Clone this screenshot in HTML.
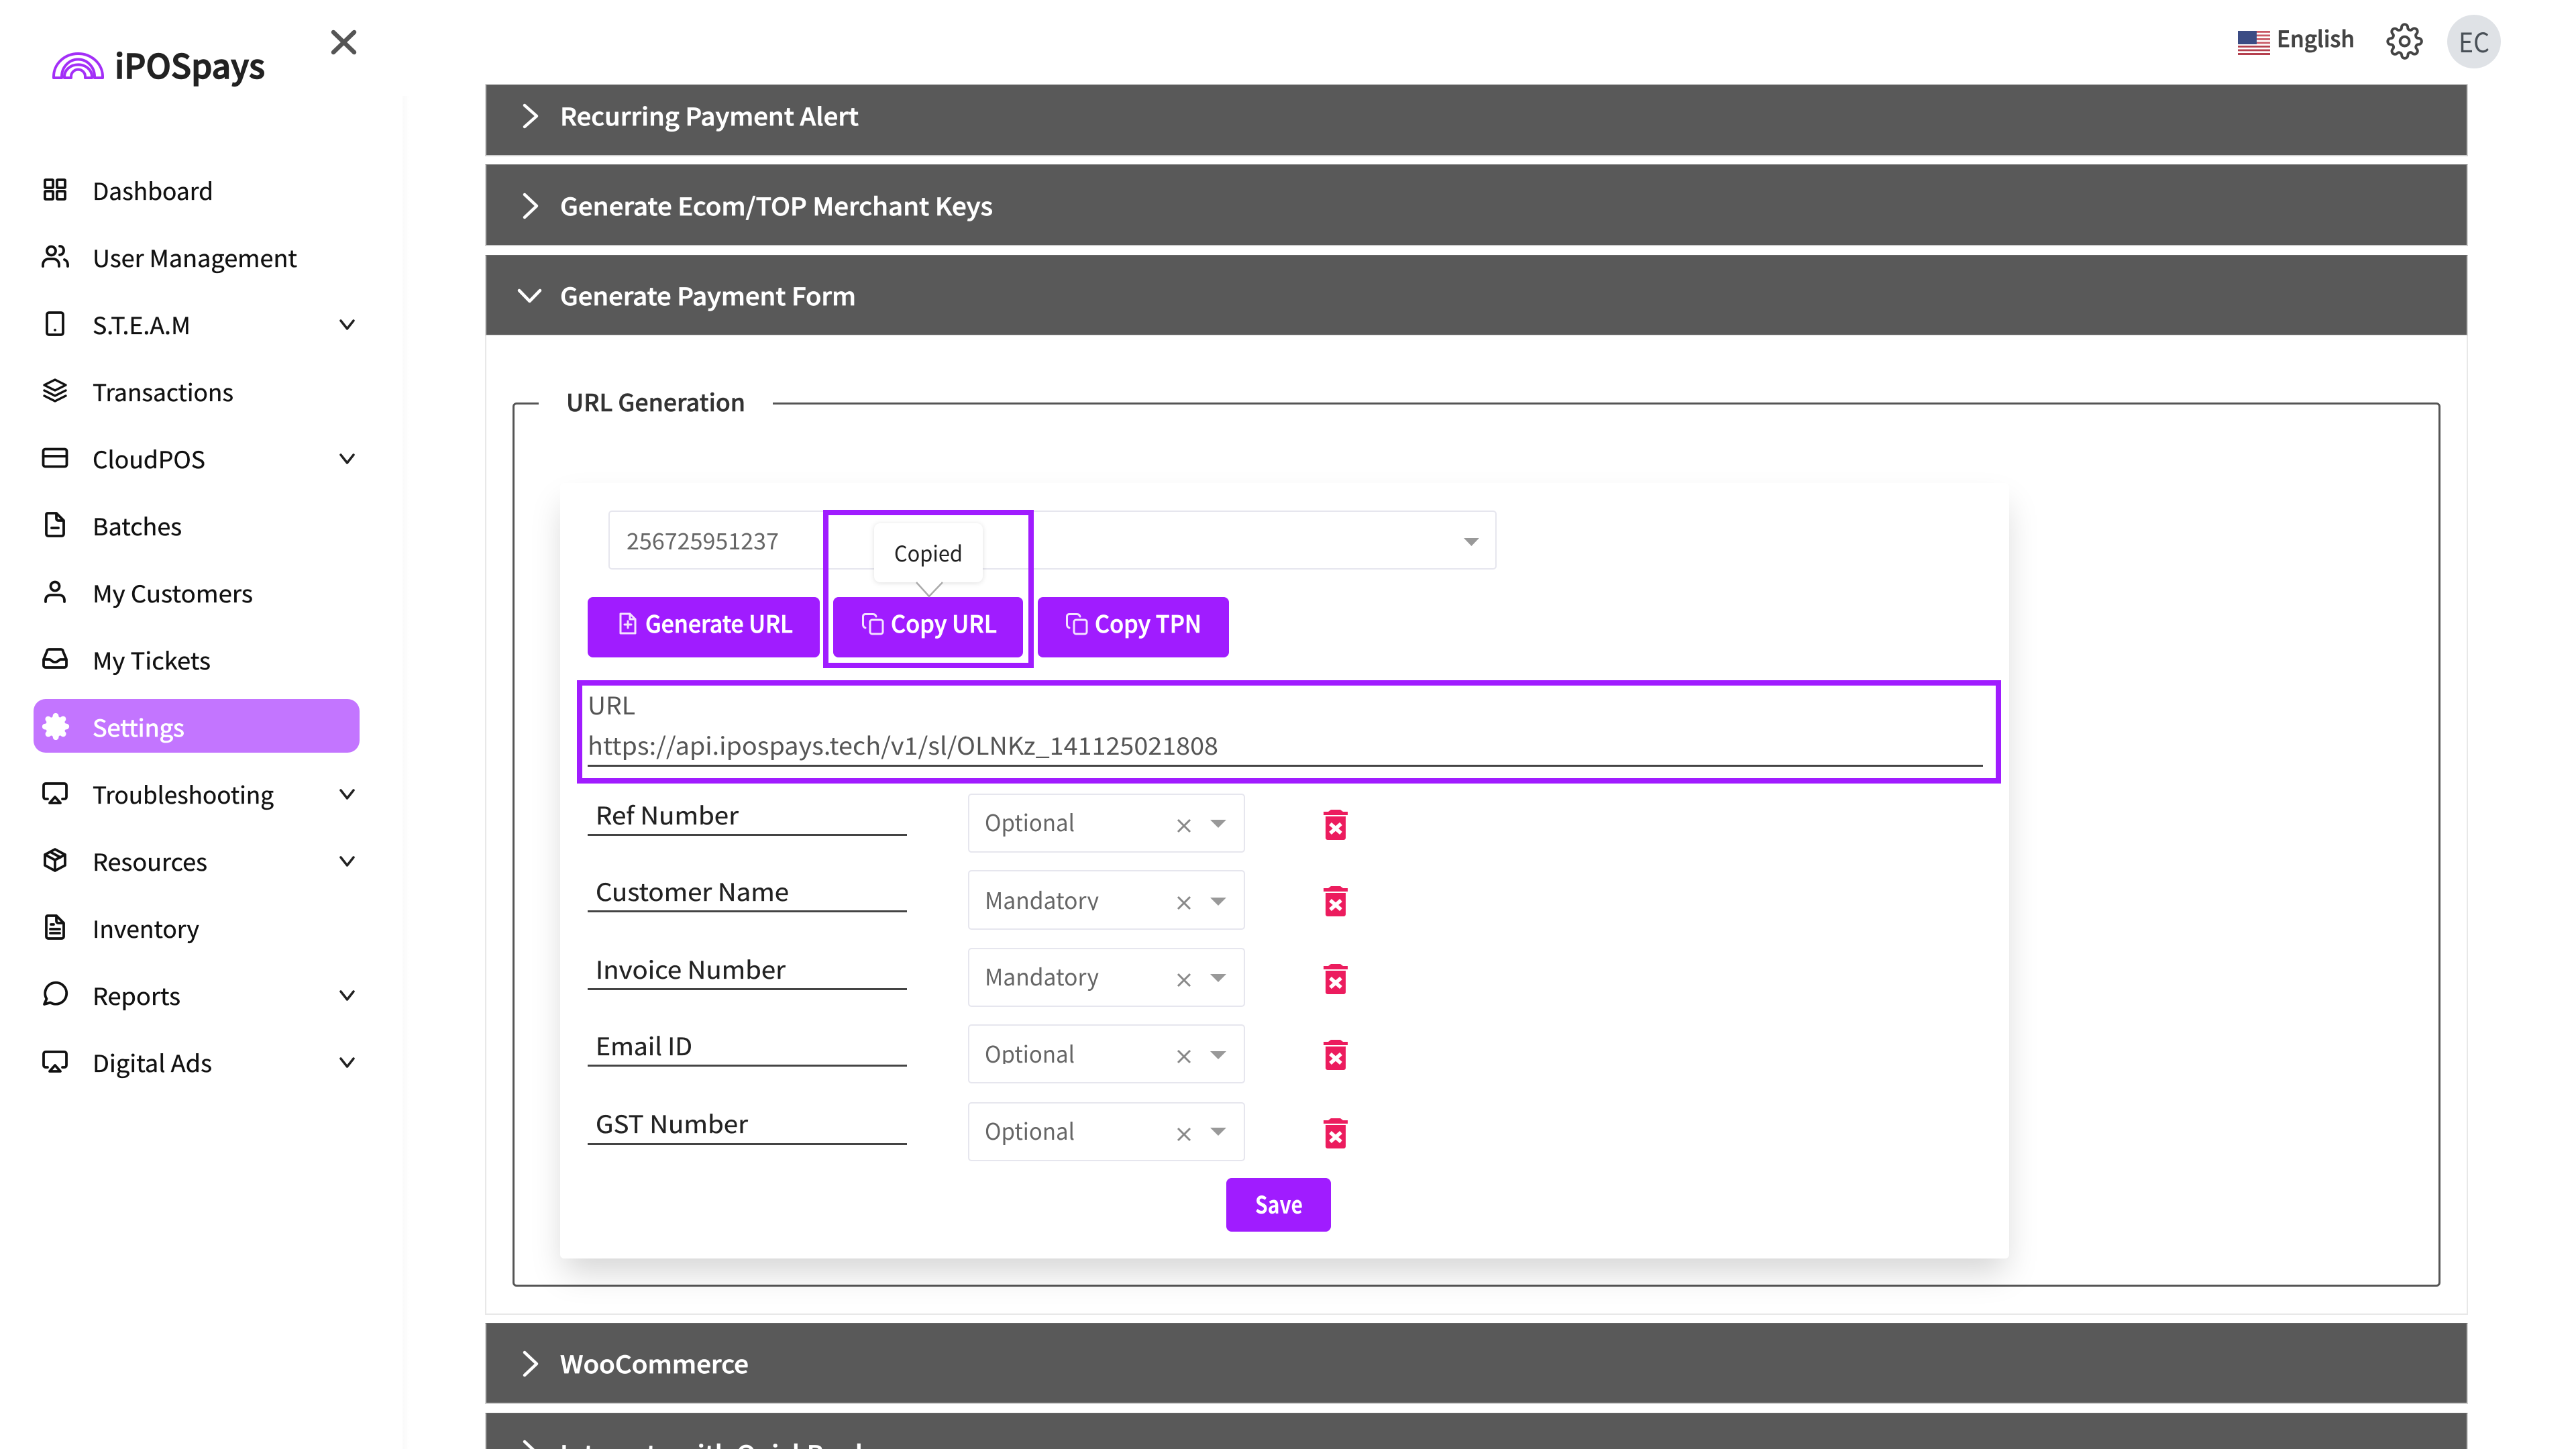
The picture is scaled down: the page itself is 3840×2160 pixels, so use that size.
<!DOCTYPE html>
<html lang="en">
<head>
<meta charset="utf-8">
<title>iPOSpays</title>
<style>
html,body{margin:0;padding:0;background:#fff;width:3840px;height:2160px;overflow:hidden}
#p{position:relative;width:3840px;height:2160px;overflow:hidden;background:#fff}
.b{position:absolute;box-sizing:border-box}
.hd{left:723px;width:2956px;background:#595959;border:2px solid #cfcfcf;border-top:1px solid #6a6a6a}
.pu{background:#a01cff;border-radius:8px}
.sel{background:#fff;border:2px solid #e6e6ee;border-radius:5px;left:1443px;width:413px}
.hl{border:8px solid #a01cff}
.ul{background:#444;left:876px;width:476px;height:3px}
svg{position:absolute;left:0;top:0}
text{font-family:"Noto Sans CJK JP","Liberation Sans",sans-serif}
.n{font-size:35px;fill:#111;stroke:#111;stroke-width:.35px}
.h{font-size:36px;fill:#fff;stroke:#fff;stroke-width:.7px;font-weight:500}
.l{font-size:36px;fill:#222;stroke:#222;stroke-width:.3px}
.g{font-size:34px;fill:#666}
.w{font-size:35px;fill:#fff;stroke:#fff;stroke-width:.7px;font-weight:500}
.i{fill:none;stroke:#111;stroke-width:3.8;stroke-linecap:round;stroke-linejoin:round}
.ch{fill:none;stroke:#fff;stroke-width:4.5;stroke-linecap:round;stroke-linejoin:round}
.wi{fill:none;stroke:#f3e2ff;stroke-width:3;stroke-linecap:round;stroke-linejoin:round}
.x{fill:none;stroke:#888;stroke-width:3}
.ar{fill:#999}
.tr{fill:#ec1c5e}
.tx{fill:none;stroke:#fff;stroke-width:5.5}
</style>
</head>
<body>
<div id="p">
<!-- sidebar -->
<div class="b" style="left:600px;top:143px;width:9px;height:2017px;background:linear-gradient(90deg,#fafafa,#fcfcfc 60%,#fff)"></div>
<div class="b" style="left:50px;top:1042px;width:486px;height:80px;background:#c375ff;border-radius:18px"></div>

<!-- header top -->
<div class="b" style="left:3648px;top:22px;width:80px;height:80px;border-radius:50%;background:#dfe2e6"></div>

<!-- accordion -->
<div class="b hd" style="top:126px;height:107px"></div>
<div class="b hd" style="top:245px;height:122px"></div>
<div class="b hd" style="top:380px;height:121px"></div>
<div class="b" style="left:723px;top:500px;width:2956px;height:1460px;border:2px solid #e8e8e8;border-top:0;background:#fff"></div>
<div class="b hd" style="top:1972px;height:121px"></div>
<div class="b hd" style="top:2106px;height:54px;border-bottom:0"></div>

<!-- fieldset -->
<div class="b" style="left:764px;top:600px;width:2874px;height:1318px;border:3px solid #555;border-radius:6px"></div>
<div class="b" style="left:803px;top:590px;width:349px;height:24px;background:#fff"></div>

<!-- card -->
<div class="b" style="left:835px;top:720px;width:2160px;height:1156px;background:#fff;border-radius:6px;box-shadow:0 26px 46px -6px rgba(0,0,0,.17)"></div>
<div class="b" style="left:907px;top:761px;width:1324px;height:88px;background:#fff;border:2px solid #e6e6ee;border-radius:5px"></div>

<!-- buttons -->
<div class="b pu" style="left:876px;top:890px;width:346px;height:90px"></div>
<div class="b pu" style="left:1242px;top:890px;width:283px;height:90px"></div>
<div class="b pu" style="left:1547px;top:890px;width:285px;height:90px"></div>
<div class="b hl" style="left:1227px;top:760px;width:314px;height:236px"></div>
<div class="b" style="left:1303px;top:780px;width:162px;height:88px;background:#fff;border-radius:9px;box-shadow:0 1px 8px rgba(0,0,0,.13)"></div>

<!-- url -->
<div class="b hl" style="left:860px;top:1014px;width:2123px;height:154px"></div>
<div class="b" style="left:876px;top:1140px;width:2080px;height:3px;background:#444"></div>

<!-- rows -->
<div class="b ul" style="top:1243px"></div>
<div class="b ul" style="top:1357px"></div>
<div class="b ul" style="top:1473px"></div>
<div class="b ul" style="top:1587px"></div>
<div class="b ul" style="top:1704px"></div>
<div class="b sel" style="top:1183px;height:88px"></div>
<div class="b sel" style="top:1297px;height:89px"></div>
<div class="b sel" style="top:1413px;height:88px"></div>
<div class="b sel" style="top:1527px;height:88px"></div>
<div class="b sel" style="top:1643px;height:88px"></div>
<div class="b pu" style="left:1828px;top:1756px;width:156px;height:80px"></div>

<svg width="3840" height="2160" viewBox="0 0 3840 2160" xmlns="http://www.w3.org/2000/svg">
<!-- logo -->
<g fill="none" stroke="#a32ff7" stroke-width="4" stroke-linejoin="round">
<path d="M80 116V114A36.5 34 0 0 1 153 114V116H141V114A24.5 25.5 0 0 0 92 114V116Z"/>
<path d="M96 116V114A20.5 17.6 0 0 1 137 114V116H127V114A10.5 10.4 0 0 0 106 114V116Z"/>
</g>
<text x="171" y="117" font-size="50" font-weight="500" fill="#222" stroke="#222" stroke-width="1.5" textLength="224" lengthAdjust="spacingAndGlyphs">iPOSpays</text>
<path d="M497 48L528 78M528 48L497 78" fill="none" stroke="#555" stroke-width="6.5" stroke-linecap="round"/>

<!-- nav text -->
<text class="n" x="138" y="298" textLength="180" lengthAdjust="spacingAndGlyphs">Dashboard</text>
<text class="n" x="138" y="398" textLength="305" lengthAdjust="spacingAndGlyphs">User Management</text>
<text class="n" x="138" y="498" textLength="146" lengthAdjust="spacingAndGlyphs">S.T.E.A.M</text>
<text class="n" x="138" y="598" textLength="210" lengthAdjust="spacingAndGlyphs">Transactions</text>
<text class="n" x="138" y="698" textLength="168" lengthAdjust="spacingAndGlyphs">CloudPOS</text>
<text class="n" x="138" y="798" textLength="133" lengthAdjust="spacingAndGlyphs">Batches</text>
<text class="n" x="138" y="898" textLength="239" lengthAdjust="spacingAndGlyphs">My Customers</text>
<text class="n" x="138" y="998" textLength="176" lengthAdjust="spacingAndGlyphs">My Tickets</text>
<text class="n" x="138" y="1098" textLength="137" lengthAdjust="spacingAndGlyphs" style="fill:#fff;stroke:#fff;stroke-width:.8px">Settings</text>
<text class="n" x="138" y="1198" textLength="270" lengthAdjust="spacingAndGlyphs">Troubleshooting</text>
<text class="n" x="138" y="1298" textLength="171" lengthAdjust="spacingAndGlyphs">Resources</text>
<text class="n" x="138" y="1398" textLength="159" lengthAdjust="spacingAndGlyphs">Inventory</text>
<text class="n" x="138" y="1498" textLength="131" lengthAdjust="spacingAndGlyphs">Reports</text>
<text class="n" x="138" y="1598" textLength="178" lengthAdjust="spacingAndGlyphs">Digital Ads</text>

<!-- nav icons -->
<g class="i" transform="translate(82,282)"><rect x="-15" y="-14" width="12" height="12" rx="1"/><rect x="3" y="-14" width="12" height="12" rx="1"/><rect x="-15" y="3" width="12" height="12" rx="1"/><rect x="3" y="3" width="12" height="12" rx="1"/></g>
<g class="i" transform="translate(82,382)"><circle cx="-5.5" cy="-8" r="6.5"/><path d="M-18 15V13C-18 7-14 4-9 4H-3C2 4 6 7 6 13V15M7-15C11-15 13-12 13-8.500S11-2.500 7-2M14 5C17 6 19 9 19 13V15"/></g>
<g class="i" transform="translate(82,482)"><rect x="-12" y="-16" width="24" height="33" rx="3"/><path d="M0 10h.1"/></g>
<g class="i" transform="translate(82,582)" style="stroke-width:3.4"><path d="M0-16L16-8 0 0-16-8ZM-16 0L0 8 16 0M-16 8L0 16 16 8"/></g>
<g class="i" transform="translate(82,682)"><rect x="-17.500" y="-12.500" width="35" height="26" rx="3"/><path d="M-17.500-2H17.500"/></g>
<g class="i" transform="translate(82,782)"><path d="M-13-15A2 2 0 0 1-11-17H2L13-6V14A3 3 0 0 1 10 17H-10A3 3 0 0 1-13 14ZM2-17V-9A3 3 0 0 0 5-6H13M-5 5H5"/></g>
<g class="i" transform="translate(82,882)"><circle cx="0" cy="-8" r="6.500"/><path d="M-14 15V13C-14 8-11 5-6 5H6C11 5 14 8 14 13V15"/></g>
<g class="i" transform="translate(82,982)"><path d="M-17 1L-12-11A3 3 0 0 1-9-14H9A3 3 0 0 1 12-11L17 1V10A3 3 0 0 1 14 13H-14A3 3 0 0 1-17 10ZM-17 1H-8C-6 1-5 5 0 5S6 1 8 1H17"/></g>
<!-- settings gear -->
<g transform="translate(62,1062) scale(1.75)" fill="#fff" stroke="#fff" stroke-width="1"><path d="M19.400 15a1.650 1.650 0 0 0 .33 1.820l.06.06a2 2 0 0 1 0 2.830 2 2 0 0 1-2.830 0l-.06-.06a1.650 1.650 0 0 0-1.820-.33 1.650 1.650 0 0 0-1 1.510V21a2 2 0 0 1-2 2 2 2 0 0 1-2-2v-.09A1.650 1.650 0 0 0 9 19.400a1.650 1.650 0 0 0-1.820.33l-.06.06a2 2 0 0 1-2.830 0 2 2 0 0 1 0-2.830l.06-.06a1.650 1.650 0 0 0 .33-1.820 1.650 1.650 0 0 0-1.510-1H3a2 2 0 0 1-2-2 2 2 0 0 1 2-2h.09A1.650 1.650 0 0 0 4.600 9a1.650 1.650 0 0 0-.33-1.820l-.06-.06a2 2 0 0 1 0-2.830 2 2 0 0 1 2.830 0l.06.06a1.650 1.650 0 0 0 1.820.33H9a1.650 1.650 0 0 0 1-1.510V3a2 2 0 0 1 2-2 2 2 0 0 1 2 2v.09a1.650 1.650 0 0 0 1 1.510 1.650 1.650 0 0 0 1.820-.33l.06-.06a2 2 0 0 1 2.830 0 2 2 0 0 1 0 2.830l-.06.06a1.650 1.650 0 0 0-.33 1.820V9a1.650 1.650 0 0 0 1.510 1H21a2 2 0 0 1 2 2 2 2 0 0 1-2 2h-.09a1.650 1.650 0 0 0-1.510 1z"/></g>
<g class="i" transform="translate(82,1182)"><path d="M-11 9H-14A3 3 0 0 1-17 6V-11A3 3 0 0 1-14-14H14A3 3 0 0 1 17-11V6A3 3 0 0 1 14 9H11M0 6L8 15H-8Z"/></g>
<g class="i" transform="translate(82,1282)"><path d="M0-16L15-8V8L0 16-15 8V-8ZM-15-8L0 0 15-8M0 0V16M-7-12L8-4"/></g>
<g class="i" transform="translate(82,1382)"><path d="M-13-15A2 2 0 0 1-11-17H2L13-6V14A3 3 0 0 1 10 17H-10A3 3 0 0 1-13 14ZM2-17V-9A3 3 0 0 0 5-6H13M-6-4H-2M-7 3H7M-7 9H7"/></g>
<g class="i" transform="translate(82,1482)"><path d="M-16 15L-12.500 7A16 16 0 1 1-7 12.500Z"/></g>
<g class="i" transform="translate(82,1582)"><path d="M-11 9H-14A3 3 0 0 1-17 6V-11A3 3 0 0 1-14-14H14A3 3 0 0 1 17-11V6A3 3 0 0 1 14 9H11M0 6L8 15H-8Z"/></g>

<!-- nav chevrons -->
<g fill="none" stroke="#222" stroke-width="3.500" stroke-linecap="round" stroke-linejoin="round">
<path d="M508 478L517.500 490 527 478"/>
<path d="M508 678L517.500 690 527 678"/>
<path d="M508 1178L517.500 1190 527 1178"/>
<path d="M508 1278L517.500 1290 527 1278"/>
<path d="M508 1478L517.500 1490 527 1478"/>
<path d="M508 1578L517.500 1590 527 1578"/>
</g>

<!-- top right -->
<g>
<rect x="3336" y="46" width="48" height="36" fill="#fff"/>
<g fill="#c85a66"><rect x="3364" y="46" width="20" height="2.800"/><rect x="3364" y="51.500" width="20" height="2.800"/><rect x="3364" y="57" width="20" height="2.800"/><rect x="3364" y="62.500" width="20" height="2.800"/></g>
<g fill="#b4404e"><rect x="3336" y="68" width="48" height="2.800"/><rect x="3336" y="73.500" width="48" height="2.800"/><rect x="3336" y="79" width="48" height="3"/></g>
<rect x="3336" y="46" width="28" height="20" fill="#3b4c84"/>
</g>
<text x="3394" y="70" font-size="33" font-weight="500" fill="#444" stroke="#444" stroke-width=".7" textLength="116" lengthAdjust="spacingAndGlyphs">English</text>
<g transform="translate(3557,34) scale(2.300)" fill="none" stroke="#444" stroke-width="1.700"><circle cx="12" cy="12" r="3"/><path d="M19.400 15a1.650 1.650 0 0 0 .33 1.820l.06.06a2 2 0 0 1 0 2.830 2 2 0 0 1-2.830 0l-.06-.06a1.650 1.650 0 0 0-1.820-.33 1.650 1.650 0 0 0-1 1.510V21a2 2 0 0 1-2 2 2 2 0 0 1-2-2v-.09A1.650 1.650 0 0 0 9 19.400a1.650 1.650 0 0 0-1.820.33l-.06.06a2 2 0 0 1-2.830 0 2 2 0 0 1 0-2.830l.06-.06a1.650 1.650 0 0 0 .33-1.820 1.650 1.650 0 0 0-1.510-1H3a2 2 0 0 1-2-2 2 2 0 0 1 2-2h.09A1.650 1.650 0 0 0 4.600 9a1.650 1.650 0 0 0-.33-1.820l-.06-.06a2 2 0 0 1 0-2.830 2 2 0 0 1 2.830 0l.06.06a1.650 1.650 0 0 0 1.820.33H9a1.650 1.650 0 0 0 1-1.510V3a2 2 0 0 1 2-2 2 2 0 0 1 2 2v.09a1.650 1.650 0 0 0 1 1.510 1.650 1.650 0 0 0 1.820-.33l.06-.06a2 2 0 0 1 2.830 0 2 2 0 0 1 0 2.830l-.06.06a1.650 1.650 0 0 0-.33 1.820V9a1.650 1.650 0 0 0 1.510 1H21a2 2 0 0 1 2 2 2 2 0 0 1-2 2h-.09a1.650 1.650 0 0 0-1.510 1z"/></g>
<text x="3665" y="78" font-size="40" fill="#495057" textLength="46" lengthAdjust="spacingAndGlyphs">EC</text>

<!-- accordion text -->
<path class="ch" d="M782 157L800 173 782 189"/>
<text class="h" x="835" y="187" textLength="445" lengthAdjust="spacingAndGlyphs">Recurring Payment Alert</text>
<path class="ch" d="M782 290L800 307 782 324"/>
<text class="h" x="835" y="321" textLength="645" lengthAdjust="spacingAndGlyphs">Generate Ecom/TOP Merchant Keys</text>
<path class="ch" d="M774 433L789.500 449 805 433"/>
<text class="h" x="835" y="455" textLength="441" lengthAdjust="spacingAndGlyphs">Generate Payment Form</text>
<path class="ch" d="M782 2016L800 2033 782 2050"/>
<text class="h" x="835" y="2047" textLength="281" lengthAdjust="spacingAndGlyphs">WooCommerce</text>
<path class="ch" d="M782 2149L800 2166 782 2183"/>
<text class="h" x="835" y="2181" textLength="480" lengthAdjust="spacingAndGlyphs">Integrate with QuickBooks</text>

<!-- form text -->
<text x="844" y="613" font-size="35" font-weight="500" fill="#333" stroke="#333" stroke-width=".5" textLength="267" lengthAdjust="spacingAndGlyphs">URL Generation</text>
<text class="g" x="934" y="819" textLength="227" lengthAdjust="spacingAndGlyphs">256725951237</text>
<path class="ar" d="M2182 802H2205L2193.500 814Z"/>

<!-- tooltip -->
<path d="M1366 868L1385 889 1405 868" fill="#fff" stroke="#aaa" stroke-width="2.500"/>
<path d="M1368 866H1403V869H1368Z" fill="#fff"/>
<text x="1333" y="837" font-size="32" fill="#222" textLength="102" lengthAdjust="spacingAndGlyphs">Copied</text>

<!-- button text -->
<path class="wi" d="M925 914H939L947 922V943H925ZM939 914V922H947M936 925V935M931 930H941" transform="translate(0,1)"/>
<text class="w" x="962" y="943" textLength="220" lengthAdjust="spacingAndGlyphs">Generate URL</text>
<g class="wi" transform="translate(1285,914)"><path d="M5 22C2.500 21 1.500 19.500 1.500 17V5C1.500 2.500 3 1.500 5 1.500H16C19 1.500 20.500 3 21 5"/><rect x="12" y="10" width="19" height="21" rx="3"/></g>
<text class="w" x="1328" y="943" textLength="158" lengthAdjust="spacingAndGlyphs">Copy URL</text>
<g class="wi" transform="translate(1589,914)"><path d="M5 22C2.500 21 1.500 19.500 1.500 17V5C1.500 2.500 3 1.500 5 1.500H16C19 1.500 20.500 3 21 5"/><rect x="12" y="10" width="19" height="21" rx="3"/></g>
<text class="w" x="1632" y="943" textLength="159" lengthAdjust="spacingAndGlyphs">Copy TPN</text>

<!-- url text -->
<text x="876" y="1065" font-size="36" fill="#555" textLength="71" lengthAdjust="spacingAndGlyphs">URL</text>
<text x="876" y="1125" font-size="36" fill="#555" textLength="940" lengthAdjust="spacingAndGlyphs">https://api.ipospays.tech/v1/sl/OLNKz_141125021808</text>

<!-- row labels -->
<text class="l" x="888" y="1229" textLength="213" lengthAdjust="spacingAndGlyphs">Ref Number</text>
<text class="l" x="888" y="1343" textLength="288" lengthAdjust="spacingAndGlyphs">Customer Name</text>
<text class="l" x="888" y="1459" textLength="283" lengthAdjust="spacingAndGlyphs">Invoice Number</text>
<text class="l" x="888" y="1573" textLength="144" lengthAdjust="spacingAndGlyphs">Email ID</text>
<text class="l" x="888" y="1689" textLength="227" lengthAdjust="spacingAndGlyphs">GST Number</text>

<text class="g" x="1468" y="1239" textLength="134" lengthAdjust="spacingAndGlyphs">Optional</text>
<text class="g" x="1468" y="1355" textLength="170" lengthAdjust="spacingAndGlyphs">Mandatory</text>
<rect x="1600" y="1357" width="40" height="12" fill="#fff"/>
<text class="g" x="1468" y="1469" textLength="170" lengthAdjust="spacingAndGlyphs">Mandatory</text>
<text class="g" x="1468" y="1584" textLength="134" lengthAdjust="spacingAndGlyphs">Optional</text>
<rect x="1480" y="1586" width="40" height="12" fill="#fff"/>
<text class="g" x="1468" y="1699" textLength="134" lengthAdjust="spacingAndGlyphs">Optional</text>

<!-- clear x + arrows -->
<path class="x" d="M1756 1222L1774 1240M1774 1222L1756 1240"/>
<path class="x" d="M1756 1337L1774 1355M1774 1337L1756 1355"/>
<path class="x" d="M1756 1452L1774 1470M1774 1452L1756 1470"/>
<path class="x" d="M1756 1566L1774 1584M1774 1566L1756 1584"/>
<path class="x" d="M1756 1682L1774 1700M1774 1682L1756 1700"/>
<path class="ar" d="M1804 1222H1828L1816 1234Z"/>
<path class="ar" d="M1804 1338H1828L1816 1350Z"/>
<path class="ar" d="M1804 1452H1828L1816 1464Z"/>
<path class="ar" d="M1804 1567H1828L1816 1579Z"/>
<path class="ar" d="M1804 1681H1828L1816 1693Z"/>

<!-- trash -->
<g transform="translate(0,1207)"><path class="tr" d="M1984 0H1998L2002 3H2009V8H1973V3H1980ZM1976 10H2006V42A3 3 0 0 1 2003 45H1979A3 3 0 0 1 1976 42Z"/><path class="tx" d="M1983 21L1999 35M1999 21L1983 35"/></g>
<g transform="translate(0,1321)"><path class="tr" d="M1984 0H1998L2002 3H2009V8H1973V3H1980ZM1976 10H2006V42A3 3 0 0 1 2003 45H1979A3 3 0 0 1 1976 42Z"/><path class="tx" d="M1983 21L1999 35M1999 21L1983 35"/></g>
<g transform="translate(0,1437)"><path class="tr" d="M1984 0H1998L2002 3H2009V8H1973V3H1980ZM1976 10H2006V42A3 3 0 0 1 2003 45H1979A3 3 0 0 1 1976 42Z"/><path class="tx" d="M1983 21L1999 35M1999 21L1983 35"/></g>
<g transform="translate(0,1550)"><path class="tr" d="M1984 0H1998L2002 3H2009V8H1973V3H1980ZM1976 10H2006V42A3 3 0 0 1 2003 45H1979A3 3 0 0 1 1976 42Z"/><path class="tx" d="M1983 21L1999 35M1999 21L1983 35"/></g>
<g transform="translate(0,1667)"><path class="tr" d="M1984 0H1998L2002 3H2009V8H1973V3H1980ZM1976 10H2006V42A3 3 0 0 1 2003 45H1979A3 3 0 0 1 1976 42Z"/><path class="tx" d="M1983 21L1999 35M1999 21L1983 35"/></g>

<text x="1871" y="1809" font-size="36" font-weight="700" fill="#fff" textLength="71" lengthAdjust="spacingAndGlyphs">Save</text>
</svg>
</div>
</body>
</html>
